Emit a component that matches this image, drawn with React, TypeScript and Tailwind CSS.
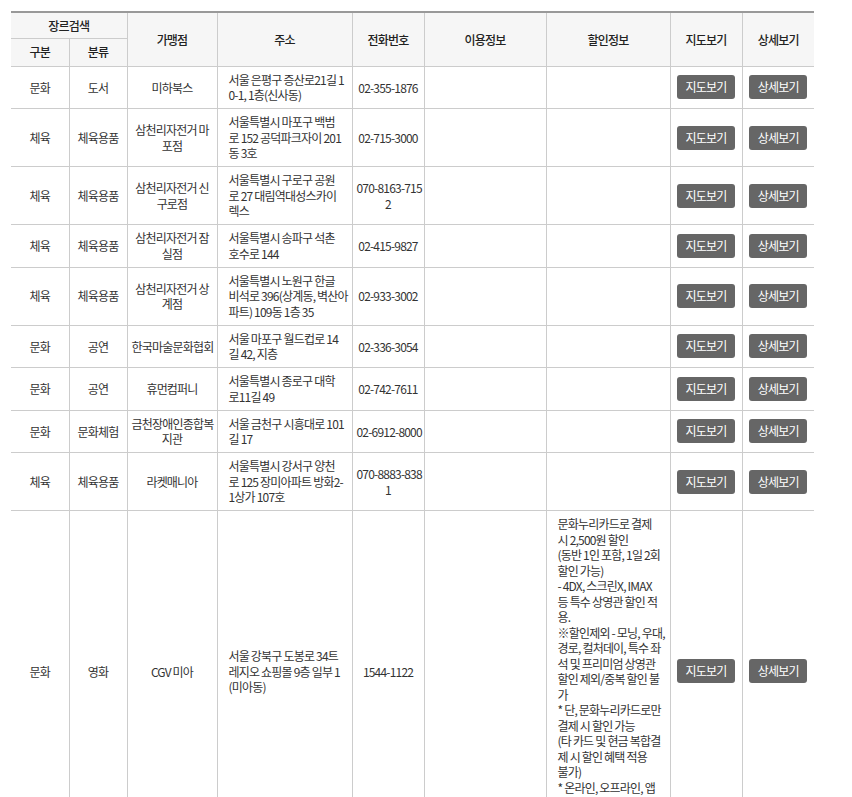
type Row = {
  gubun: string;
  bunryu: string;
  name: string[];
  addr: string[];
  tel: string[];
  discount?: string[];
};

const rows: Row[] = [
  { gubun: "문화", bunryu: "도서", name: ["미하북스"], addr: ["서울 은평구 증산로21길 1", "0-1, 1층(신사동)"], tel: ["02-355-1876"] },
  { gubun: "체육", bunryu: "체육용품", name: ["삼천리자전거 마", "포점"], addr: ["서울특별시 마포구 백범", "로 152 공덕파크자이 201", "동 3호"], tel: ["02-715-3000"] },
  { gubun: "체육", bunryu: "체육용품", name: ["삼천리자전거 신", "구로점"], addr: ["서울특별시 구로구 공원", "로 27 대림역대성스카이", "렉스"], tel: ["070-8163-715", "2"] },
  { gubun: "체육", bunryu: "체육용품", name: ["삼천리자전거 잠", "실점"], addr: ["서울특별시 송파구 석촌", "호수로 144"], tel: ["02-415-9827"] },
  { gubun: "체육", bunryu: "체육용품", name: ["삼천리자전거 상", "계점"], addr: ["서울특별시 노원구 한글", "비석로 396(상계동, 벽산아", "파트) 109동 1층 35"], tel: ["02-933-3002"] },
  { gubun: "문화", bunryu: "공연", name: ["한국마술문화협회"], addr: ["서울 마포구 월드컵로 14", "길 42, 지층"], tel: ["02-336-3054"] },
  { gubun: "문화", bunryu: "공연", name: ["휴먼컴퍼니"], addr: ["서울특별시 종로구 대학", "로11길 49"], tel: ["02-742-7611"] },
  { gubun: "문화", bunryu: "문화체험", name: ["금천장애인종합복", "지관"], addr: ["서울 금천구 시흥대로 101", "길 17"], tel: ["02-6912-8000"] },
  { gubun: "체육", bunryu: "체육용품", name: ["라켓매니아"], addr: ["서울특별시 강서구 양천", "로 125 장미아파트 방화2-", "1상가 107호"], tel: ["070-8883-838", "1"] },
  {
    gubun: "문화",
    bunryu: "영화",
    name: ["CGV 미아"],
    addr: ["서울 강북구 도봉로 34트", "레지오 쇼핑몰 9층 일부 1", "(미아동)"],
    tel: ["1544-1122"],
    discount: [
      "문화누리카드로 결제",
      "시 2,500원 할인",
      "(동반 1인 포함, 1일 2회",
      "할인 가능)",
      "- 4DX, 스크린X, IMAX",
      "등 특수 상영관 할인 적",
      "용.",
      "※할인제외 - 모닝, 우대,",
      "경로, 컬처데이, 특수 좌",
      "석 및 프리미엄 상영관",
      "할인 제외/중복 할인 불",
      "가",
      "* 단, 문화누리카드로만",
      "결제 시 할인 가능",
      "(타 카드 및 현금 복합결",
      "제 시 할인 혜택 적용",
      "불가)",
      "* 온라인, 오프라인, 앱",
      "결제 가능",
      "(일부 지점 제외)",
    ],
  },
];

function Lines({ lines }: { lines: string[] }) {
  return (
    <>
      {lines.map((l, i) => (
        <span key={i} className="block whitespace-nowrap">
          {l}
        </span>
      ))}
    </>
  );
}

const th = "border-l border-b border-[#cccccc] bg-[#f6f6f6] font-medium text-[#222]";
const thTop = `${th} border-t-2 border-t-[#999999]`;
const td = "border-l border-b border-[#cccccc] px-[4px] py-[5.25px] text-center align-middle";

function Btn({ label }: { label: string }) {
  return (
    <span className="inline-block h-[24px] w-[58px] rounded-[3px] bg-[#666666] text-center leading-[24px] text-white">
      {label}
    </span>
  );
}

export default function App() {
  return (
    <div
      className="min-h-[797px] bg-white pl-[11px] pt-[11px] text-[12px] leading-[15.5px] tracking-[-0.8px] text-[#333]"
      style={{ fontFamily: '"Noto Sans CJK KR", "Noto Sans", sans-serif' }}
    >
      <table className="w-[803px] table-fixed border-collapse">
        <colgroup>
          <col className="w-[58px]" />
          <col className="w-[58px]" />
          <col className="w-[90px]" />
          <col className="w-[135px]" />
          <col className="w-[72px]" />
          <col className="w-[122px]" />
          <col className="w-[124px]" />
          <col className="w-[72px]" />
          <col className="w-[72px]" />
        </colgroup>
        <thead>
          <tr className="h-[26px]">
            <th colSpan={2} className={`${thTop} border-l-0`}>
              장르검색
            </th>
            <th rowSpan={2} className={thTop}>가맹점</th>
            <th rowSpan={2} className={thTop}>주소</th>
            <th rowSpan={2} className={thTop}>전화번호</th>
            <th rowSpan={2} className={thTop}>이용정보</th>
            <th rowSpan={2} className={thTop}>할인정보</th>
            <th rowSpan={2} className={thTop}>지도보기</th>
            <th rowSpan={2} className={thTop}>상세보기</th>
          </tr>
          <tr className="h-[28px]">
            <th className={`${th} border-l-0`}>구분</th>
            <th className={th}>분류</th>
          </tr>
        </thead>
        <tbody>
          {rows.map((r, idx) => (
            <tr key={idx}>
              <td className={`${td} border-l-0`}>{r.gubun}</td>
              <td className={td}>{r.bunryu}</td>
              <td className={td}>
                <Lines lines={r.name} />
              </td>
              <td className={`${td} pl-[11px] text-left`}>
                <Lines lines={r.addr} />
              </td>
              <td className={td}>
                <Lines lines={r.tel} />
              </td>
              <td className={td}></td>
              <td className={`${td} pl-[11px] text-left`}>
                {r.discount && <Lines lines={r.discount} />}
              </td>
              <td className={td}>
                <Btn label="지도보기" />
              </td>
              <td className={td}>
                <Btn label="상세보기" />
              </td>
            </tr>
          ))}
        </tbody>
      </table>
    </div>
  );
}
